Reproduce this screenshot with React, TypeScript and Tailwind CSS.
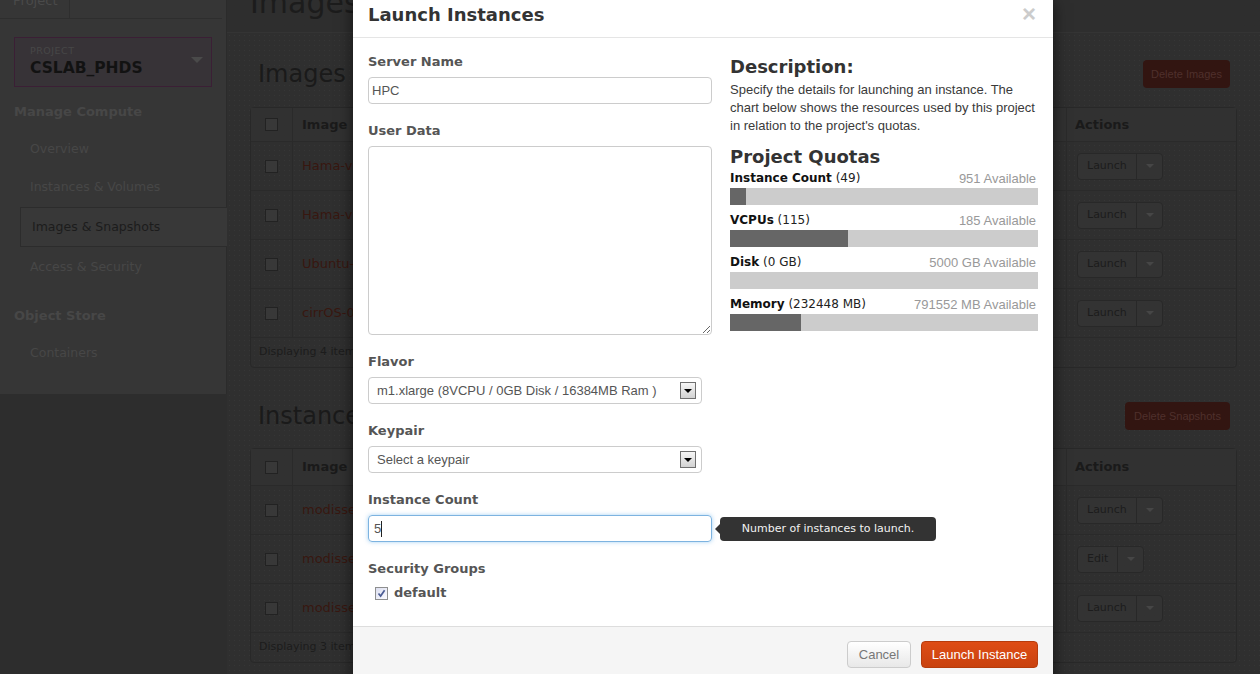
import React from "react";

const imageRows = ["Hama-vm-image", "Hama-vm-snapshot", "Ubuntu-12.04-server", "cirrOS-0.3.1-x86_64"];
const snapRows = ["modisse-snap-1", "modisse-snap-2", "modisse-snap-3"];

function BtnGroup({ label, edit }: { label: string; edit?: boolean }) {
  return (
    <div className="flex h-[27px] rounded-[4px] border border-[#282828] bg-[#333333] font-['DejaVu_Sans',sans-serif] text-[11px] text-[#1c1c1c]">
      <div className={edit ? "w-[40px] pl-[9px] flex items-center border-r border-[#282828]" : "w-[59px] pl-[9px] flex items-center border-r border-[#282828]"}>
        {label}
      </div>
      <div className="w-[25px] flex items-center justify-center">
        <span className="w-0 h-0 border-l-[4px] border-r-[4px] border-t-[4px] border-l-transparent border-r-transparent border-t-[#464646]" />
      </div>
    </div>
  );
}

function BgCheck() {
  return <span className="block w-[13px] h-[13px] border border-[#222] bg-[#383838]" />;
}

function BgTable({ rows, footer, header37 }: { rows: string[]; footer: string; header37?: boolean }) {
  return (
    <div className="border border-[#282828] rounded-[4px] font-['DejaVu_Sans',sans-serif]">
      <div className={header37 ? "flex h-[37px] bg-[#313131] border-b border-[#2a2a2a]" : "flex h-[34px] bg-[#313131] border-b border-[#2a2a2a]"}>
        <div className="w-[42px] flex items-center justify-center border-r border-[#2a2a2a]"><BgCheck /></div>
        <div className="flex-1 pl-[9px] flex items-center text-[13px] font-bold text-[#1a1a1a]">Image</div>
        <div className="w-[170px] border-l border-[#2a2a2a] pl-[8px] flex items-center text-[13px] font-bold text-[#1a1a1a]">Actions</div>
      </div>
      {rows.map((r, i) => (
        <div key={i} className="flex h-[49px] border-b border-[#2a2a2a]">
          <div className="w-[42px] flex items-center justify-center border-r border-[#2a2a2a]"><BgCheck /></div>
          <div className="flex-1 pl-[9px] flex items-center text-[13px] text-[#381710]">{r}</div>
          <div className="w-[170px] border-l border-[#2a2a2a] pl-[10px] flex items-center">
            <BtnGroup label={header37 && i === 1 ? "Edit" : "Launch"} edit={header37 && i === 1} />
          </div>
        </div>
      ))}
      <div className="h-[29px] pl-[8px] flex items-center text-[11px] text-[#1c1c1c]">{footer}</div>
    </div>
  );
}

function Label({ children }: { children: React.ReactNode }) {
  return (
    <div className="font-['DejaVu_Sans',sans-serif] text-[13px] leading-[18px] font-bold text-[#555] mb-[6px]">{children}</div>
  );
}

function SelectBox({ text }: { text: string }) {
  return (
    <div className="w-[334px] h-[27px] border border-[#ccc] rounded-[4px] flex items-center justify-between pl-[8px] pr-[5px] font-['Liberation_Sans',sans-serif] text-[13px] text-[#555]">
      <span>{text}</span>
      <span className="w-[16px] h-[17px] border border-[#6f6f6f] bg-[linear-gradient(#f6f6f6,#d2d2d2)] flex items-center justify-center">
        <span className="w-0 h-0 border-l-[4px] border-r-[4px] border-t-[4px] border-l-transparent border-r-transparent border-t-[#000]" />
      </span>
    </div>
  );
}

function Quota({ label, used, avail, fill }: { label: string; used: string; avail: string; fill: number }) {
  return (
    <div>
      <div className="flex justify-between h-[19px] leading-[19px]">
        <span className="font-['DejaVu_Sans',sans-serif] text-[12px] text-[#222]">
          <b className="text-[#111]">{label}</b> ({used})
        </span>
        <span className="font-['Liberation_Sans',sans-serif] text-[13px] text-[#999] pr-[2px]">{avail} Available</span>
      </div>
      <div className="h-[17px] bg-[#cccccc] mb-[6px]">
        <div className="h-full bg-[#666666]" style={{ width: fill }} />
      </div>
    </div>
  );
}

export default function App() {
  return (
    <div className="relative w-[1260px] h-[674px] overflow-hidden bg-[#2d2d2d] flex">
      {/* Sidebar */}
      <aside className="w-[227px] shrink-0 self-start h-[394px] bg-[#363636] border-r border-[#2b2b2b] font-['DejaVu_Sans',sans-serif]">
        <div className="flex h-[19px] w-[222px] border-b border-[#2e2e2e]">
          <div className="w-[70px] border-r border-[#2e2e2e] pl-[13px] overflow-hidden">
            <div className="text-[13px] leading-[16px] -mt-[7px] text-[#4a4a4a]">Project</div>
          </div>
        </div>
        <div className="relative mx-[14px] mt-[18px] h-[50px] border border-[#3b1f35] bg-[#373337] pl-[15px] pt-[7px]">
          <div className="text-[9.5px] leading-[12px] text-[#474747] tracking-[0.5px]">PROJECT</div>
          <div className="mt-[2px] text-[15.5px] leading-[18px] font-bold text-[#121212]">CSLAB_PHDS</div>
          <span className="absolute right-[8px] top-[19px] w-0 h-0 border-l-[6px] border-r-[6px] border-t-[6px] border-l-transparent border-r-transparent border-t-[#4a4a4a]" />
        </div>
        <div className="mt-[16px] px-[14px] text-[13px] leading-[18px] font-bold text-[#474747] mb-[8px]">Manage Compute</div>
        <div className="h-[38px] leading-[40px] pl-[30px] text-[12.5px] text-[#474747]">Overview</div>
        <div className="h-[40px] leading-[40px] pl-[30px] text-[12.5px] text-[#474747]">Instances &amp; Volumes</div>
        <div className="h-[40px] leading-[38px] ml-[20px] -mr-[1px] pl-[11px] text-[12.5px] text-[#1c1c1c] bg-[#383838] border border-r-0 border-[#2c2c2c]">Images &amp; Snapshots</div>
        <div className="h-[40px] leading-[40px] pl-[30px] text-[12.5px] text-[#474747]">Access &amp; Security</div>
        <div className="mt-[20px] px-[14px] text-[13px] leading-[18px] font-bold text-[#474747] mb-[8px]">Object Store</div>
        <div className="h-[40px] leading-[40px] pl-[30px] text-[12.5px] text-[#474747]">Containers</div>
      </aside>

      {/* Main */}
      <main className="flex-1 flex flex-col font-['DejaVu_Sans',sans-serif]">
        <div className="h-[32px] pl-[23px] overflow-hidden bg-[#2e2e2e]">
          <div className="text-[30px] leading-[30px] -mt-[12px] text-[#1c1c1c]">Images &amp; Snapshots</div>
        </div>
        <div className="flex-1 border-t border-[#343434] bg-[#2f2f2f] bg-[image:radial-gradient(circle,#363636_0.7px,transparent_0.9px)] bg-size-[5px_5px] pl-[23px] pr-[23px]">
          <div className="mt-[27px] h-[28px] flex items-center justify-between pl-[8px] pr-[7px]">
            <div className="text-[24px] leading-[28px] text-[#1a1a1a]">Images</div>
            <div className="h-[28px] w-[87px] rounded-[4px] bg-[#321511] flex items-center justify-center font-['Liberation_Sans',sans-serif] text-[11px] text-[#4f302c]">Delete Images</div>
          </div>
          <div className="mt-[19px]">
            <BgTable rows={imageRows} footer="Displaying 4 items" />
          </div>
          <div className="mt-[34px] h-[28px] flex items-center justify-between pl-[8px] pr-[7px]">
            <div className="text-[24px] leading-[28px] text-[#1a1a1a]">Instance Snapshots</div>
            <div className="h-[28px] w-[105px] rounded-[4px] bg-[#321511] flex items-center justify-center font-['Liberation_Sans',sans-serif] text-[11px] text-[#4f302c]">Delete Snapshots</div>
          </div>
          <div className="mt-[18px]">
            <BgTable rows={snapRows} footer="Displaying 3 items" header37 />
          </div>
        </div>
      </main>

      {/* Modal */}
      <div className="absolute left-[353px] top-0 w-[700px] bg-white shadow-[0_3px_14px_rgba(0,0,0,0.6)]">
        <div className="relative h-[38px] border-b border-[#e5e5e5] px-[15px] pt-[5px]">
          <div className="font-['DejaVu_Sans',sans-serif] font-bold text-[18px] leading-[20px] text-[#333]">Launch Instances</div>
          <span className="absolute right-[17px] top-[1px] font-['Liberation_Sans',sans-serif] font-bold text-[24px] leading-[26px] text-[#cccccc]">×</span>
        </div>
        <div className="flex gap-[18px] px-[15px] pt-[15px] pb-[24px]">
          {/* left column */}
          <div className="w-[344px]">
            <Label>Server Name</Label>
            <div className="h-[27px] border border-[#ccc] rounded-[4px] pl-[3px] flex items-center font-['Liberation_Sans',sans-serif] text-[13px] text-[#555] mb-[18px]">HPC</div>
            <Label>User Data</Label>
            <textarea
              readOnly
              className="block w-[344px] h-[189px] border border-[#ccc] rounded-[4px] resize-y outline-none mb-[18px]"
            />
            <Label>Flavor</Label>
            <div className="mb-[18px]">
              <SelectBox text="m1.xlarge (8VCPU / 0GB Disk / 16384MB Ram )" />
            </div>
            <Label>Keypair</Label>
            <div className="mb-[18px]">
              <SelectBox text="Select a keypair" />
            </div>
            <Label>Instance Count</Label>
            <div className="relative mb-[18px]">
              <div className="h-[27px] border border-[#7db3e0] rounded-[4px] pl-[5px] flex items-center font-['Liberation_Sans',sans-serif] text-[13px] text-[#555] shadow-[0_0_4px_rgba(82,168,236,0.5)]">
                5<span className="inline-block w-px h-[16px] bg-[#222]" />
              </div>
              <div className="absolute left-[352px] top-[2px] h-[24px] w-[216px] rounded-[4px] bg-[#333] flex items-center justify-center font-['DejaVu_Sans',sans-serif] text-[11px] text-[#f2f2f2]">
                <span className="absolute left-[-5px] top-[7px] w-0 h-0 border-t-[5px] border-b-[5px] border-r-[5px] border-t-transparent border-b-transparent border-r-[#333]" />
                Number of instances to launch.
              </div>
            </div>
            <div className="font-['DejaVu_Sans',sans-serif] text-[13px] leading-[18px] font-bold text-[#555]">Security Groups</div>
            <div className="mt-[6px] h-[18px] flex items-center gap-[6px] pl-[7px]">
              <span className="w-[13px] h-[13px] border border-[#8e8f8f] bg-[linear-gradient(135deg,#dcdff0,#fbfbff)] flex items-center justify-center">
                <svg width="9" height="9" viewBox="0 0 9 9">
                  <path d="M1.5 4.5 L3.6 7 L7.6 1.2" fill="none" stroke="#4b5c94" strokeWidth="1.7" />
                </svg>
              </span>
              <span className="font-['DejaVu_Sans',sans-serif] text-[13px] font-bold text-[#555]">default</span>
            </div>
          </div>
          {/* right column */}
          <div className="w-[310px] pt-[4px]">
            <div className="font-['DejaVu_Sans',sans-serif] font-bold text-[18px] leading-[20px] text-[#333]">Description:</div>
            <p className="mt-[4px] font-['Liberation_Sans',sans-serif] text-[13px] leading-[18px] text-[#3a3a3a] whitespace-nowrap">
              Specify the details for launching an instance. The<br />
              chart below shows the resources used by this project<br />
              in relation to the project's quotas.
            </p>
            <div className="mt-[11.5px] font-['DejaVu_Sans',sans-serif] font-bold text-[18px] leading-[20px] text-[#333]">Project Quotas</div>
            <div className="mt-[2.5px]">
              <Quota label="Instance Count" used="49" avail="951" fill={16} />
              <Quota label="VCPUs" used="115" avail="185" fill={118} />
              <Quota label="Disk" used="0 GB" avail="5000 GB" fill={0} />
              <Quota label="Memory" used="232448 MB" avail="791552 MB" fill={71} />
            </div>
          </div>
        </div>
        <div className="h-[60px] border-t border-[#dddddd] bg-[#f5f5f5] flex justify-end items-start gap-[10px] pt-[14px] pr-[15px] font-['Liberation_Sans',sans-serif] text-[13px]">
          <div className="w-[64px] h-[27px] rounded-[4px] border border-[#cccccc] bg-[linear-gradient(#ffffff,#e8e8e8)] flex items-center justify-center text-[#777]">Cancel</div>
          <div className="w-[117px] h-[27px] rounded-[4px] border border-[#b63c0c] bg-[linear-gradient(#de4d15,#c9420f)] flex items-center justify-center text-white">Launch Instance</div>
        </div>
      </div>
    </div>
  );
}
